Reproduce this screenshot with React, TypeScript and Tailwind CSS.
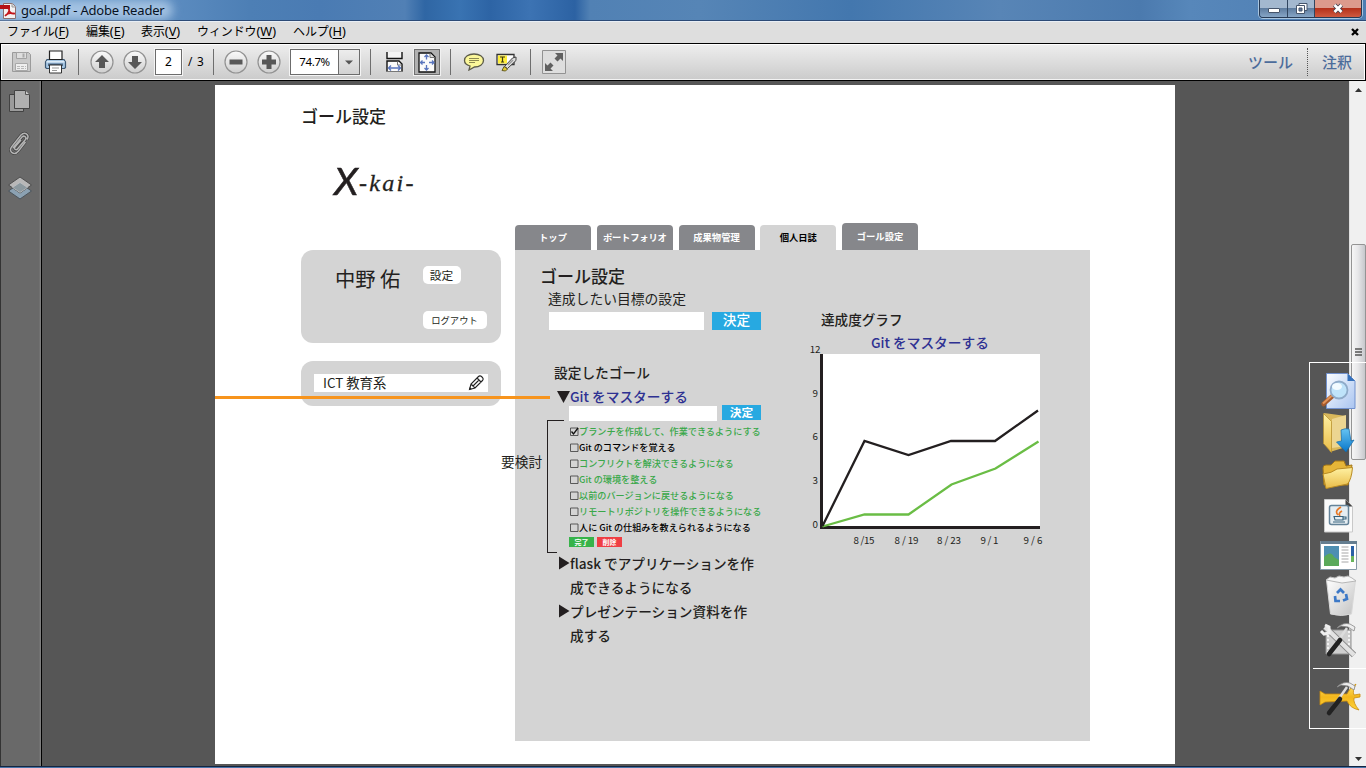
import React from "react";

const ui = "font-['Noto_Sans','Noto_Sans_CJK_JP',sans-serif]";
const jp = "font-['Noto_Sans_CJK_JP',sans-serif]";

type ArtProps = { box: string; className: string; children: React.ReactNode };
const Art = ({ box, className, children }: ArtProps) => (
  <svg viewBox={box} className={"block shrink-0 " + className} fill="none">
    {children}
  </svg>
);

const Sep = ({ className }: { className: string }) => (
  <div className={"h-[26px] w-px shrink-0 bg-[#6e6e6e] " + className} />
);

const RoundButton = ({ className, d }: { className: string; d: string }) => (
  <Art box="0 0 24 24" className={"h-6 w-6 " + className}>
    <defs>
      <linearGradient id="rb" x1="0" y1="0" x2="0" y2="1">
        <stop offset="0" stopColor="#fafafa" />
        <stop offset="1" stopColor="#cfcfcf" />
      </linearGradient>
    </defs>
    <circle cx="12" cy="12" r="11" fill="url(#rb)" stroke="#929292" strokeWidth="1.2" />
    <path d={d} fill="#585858" />
  </Art>
);

const TitleBar = () => (
  <header className="relative flex h-[22px] shrink-0 justify-between overflow-hidden border-b border-[#e8eef5] bg-[linear-gradient(90deg,#6a9acb_0px,#5c8cc0_170px,#4d7fb5_250px,#4a7bb3_320px,#5180b5_405px,#2f66a4_425px,#3973b2_460px,#2d64a5_490px,#3c73b3_530px,#2c62a3_575px,#5181b4_590px,#5685b6_700px,#4377ae_850px,#5885b6_1000px,#4b7aae_1140px,#5787ba_1190px,#4d7db2_1366px)]">
    <div className="absolute inset-x-0 bottom-0 h-px bg-[#2c4a76]" />
    <div className="absolute -left-3 top-0 h-[20px] w-[185px] rounded-full bg-[#b9d3ec]/75 blur-[5px]" />
    <div className="relative flex h-5 items-center">
      <Art box="0 0 17 20" className="h-5 w-[17px]">
        <path d="M3.500 3.500h9l3 3v12h-12z" fill="#f4f2f2" stroke="#8b6f70" />
        <path d="M12 3.500v3.500h3.500" stroke="#9b9b9b" fill="#ddd" />
        <path d="M0 5h10v4H0z" fill="#b51218" />
        <path d="M5 16c3-2 5-6 4-8M8.500 9c1 4 4 5 6.500 4.500M5 16c2-2.500 6-3.500 10-2.500" stroke="#c3161c" strokeWidth="1.500" />
      </Art>
      <span className={"ml-1 text-[13px] leading-5 tracking-[-0.180px] text-[#08121f] " + ui}>goal.pdf - Adobe Reader</span>
    </div>
    <div className="relative mr-1 flex h-[18px] w-[103px] overflow-hidden rounded-b-[4px] border border-t-0 border-[#263a55] shadow-[0_0_0_1px_#a9c5df]">
      <div className="flex w-7 items-center justify-center border-r border-[#30455f] bg-[linear-gradient(#a3b8cf_0_48%,#5e7c9f_49%,#86a5c6)]">
        <div className="mt-[3px] h-[5px] w-3 rounded-[1px] border border-[#46556b] bg-white" />
      </div>
      <div className="flex w-[27px] items-center justify-center border-r border-[#30455f] bg-[linear-gradient(#a3b8cf_0_48%,#5e7c9f_49%,#86a5c6)]">
        <Art box="0 0 13 13" className="mb-px h-[13px] w-[13px]">
          <path d="M4 1.500h8v7h-8z" fill="#fff" stroke="#46556b" />
          <path d="M1.500 3.500h8v8h-8z" fill="#fff" stroke="#46556b" />
          <path d="M4 6h3v3h-3z" fill="#60799a" stroke="#46556b" />
        </Art>
      </div>
      <div className="flex flex-1 items-center justify-center bg-[linear-gradient(#dc9a8c_0_45%,#b3301a_48%,#cf5a40)]">
        <Art box="0 0 12 11" className="mb-px h-[11px] w-3">
          <path d="M2.500 2l7 7M9.500 2l-7 7" stroke="#45424f" strokeWidth="4.500" />
          <path d="M2.500 2l7 7M9.500 2l-7 7" stroke="#fff" strokeWidth="2.700" />
        </Art>
      </div>
    </div>
  </header>
);

const Menu = ({ label, k, className }: { label: string; k: string; className: string }) => (
  <span className={"whitespace-nowrap " + className}>
    <span className="tracking-[-0.100px]">{label}</span>
    <span className="text-[12.800px]">(<span className="underline underline-offset-2">{k}</span>)</span>
  </span>
);

const MenuBar = () => (
  <nav className={"flex h-[21px] shrink-0 items-center bg-[#dedede] pb-[3px] pl-[7px] text-[12px] leading-[18px] text-black " + ui}>
    <Menu label="ファイル" k="F" className="w-[79px]" />
    <Menu label="編集" k="E" className="w-[55px]" />
    <Menu label="表示" k="V" className="w-14" />
    <Menu label="ウィンドウ" k="W" className="w-24" />
    <Menu label="ヘルプ" k="H" className="w-[60px]" />
    <Art box="0 0 8 8" className="ml-auto mr-[7px] mt-[2px] h-2 w-2">
      <path d="M1 1l6 6M7 1L1 7" stroke="#000" strokeWidth="2.300" />
    </Art>
  </nav>
);

const Toolbar = () => (
  <div className="flex h-[38px] shrink-0 items-center border border-black bg-[linear-gradient(#eeeeee,#cbcbcb)] shadow-[inset_0_1px_0_#fff,inset_0_-1px_0_#f3f3f3,inset_1px_0_0_#fff,inset_-1px_0_0_#fff]">
    <Art box="0 0 21 22" className="ml-[10px] h-[22px] w-[21px]">
      <path d="M1.500 1.500h16l2 2v17h-18z" fill="#c9c9c9" stroke="#9b9b9b" />
      <path d="M5.500 1.500h10v6h-10z" fill="#dedede" stroke="#a3a3a3" />
      <path d="M11.500 2.500h2v4h-2z" fill="#aaa" />
      <path d="M4.500 12.500h12v7h-12z" fill="#eee" stroke="#a8a8a8" />
      <path d="M6 15.500h9M6 17.500h9" stroke="#b8b8b8" strokeDasharray="3 1" />
    </Art>
    <Art box="0 0 23 24" className="ml-3 h-6 w-[23px]">
      <path d="M3 9.500h17l1.500 2.500v5.500l-1 1h-18l-1-1v-5.500z" fill="#a5c6e3" stroke="#3c5873" strokeWidth="1.200" />
      <path d="M5.500 1h12.500v8.500h-12.500z" fill="#fff" stroke="#222" strokeWidth="1.200" />
      <path d="M2.500 11h18v1.500h-18z" fill="#dcebf7" />
      <path d="M4 13.500h15v2.500H4z" fill="#4d6986" />
      <path d="M5.500 15h12v8h-12z" fill="#fff" stroke="#333" />
      <path d="M8 18h7M8 20.500h5" stroke="#999" />
    </Art>
    <Sep className="ml-[11px]" />
    <RoundButton className="ml-[11px]" d="M12 5l7 7h-4v6h-6v-6h-4z" />
    <RoundButton className="ml-[9px]" d="M12 19l7-7h-4v-6h-6v6h-4z" />
    <div className={"ml-[8px] flex h-[26px] w-[27px] items-center justify-center border border-[#6c6c6c] bg-white text-[12px] shadow-[0_0_0_1px_#f4f4f4] " + ui}>2</div>
    <span className={"ml-[6px] w-[25px] whitespace-pre text-[11.800px] tracking-[0.800px] " + ui}>/ 3</span>
    <Sep className="" />
    <RoundButton className="ml-[10px]" d="M5.500 9.500h13v5h-13z" />
    <RoundButton className="ml-[9px]" d="M9.500 5h5v4.500h4.500v5h-4.500v4.500h-5v-4.500h-4.500v-5h4.500z" />
    <div className={"ml-[9px] flex h-[26px] w-[70px] border border-[#6c6c6c] bg-white shadow-[0_0_0_1px_#f4f4f4] " + ui}>
      <span className="flex w-[47px] items-center justify-center text-[11.500px] tracking-[-0.350px]">74.7%</span>
      <span className="flex flex-1 items-center justify-center border-l border-[#6c6c6c] bg-[linear-gradient(#ededed,#d2d2d2)]">
        <Art box="0 0 8 5" className="h-[5px] w-2"><path d="M0 .5h8l-4 4z" fill="#555" /></Art>
      </span>
    </div>
    <Sep className="ml-[10px]" />
    <Art box="0 0 19 22" className="ml-[14px] h-[22px] w-[19px]">
      <path d="M2 1v6.500h15v-6.500" fill="#f4f4f4" stroke="#111" strokeWidth="1.400" />
      <path d="M2 20.500v-10.500h12l3 3v7.500" fill="#fafafa" stroke="#111" strokeWidth="1.400" />
      <path d="M1 20.500h17" stroke="#777" />
      <path d="M12.500 10.500v3.500h4" stroke="#777" />
      <path d="M3.500 17h12M6 14.500l-2.500 2.500l2.500 2.500M13 14.500l2.500 2.500l-2.500 2.500" stroke="#5975bd" strokeWidth="1.300" />
    </Art>
    <div className="ml-[10px] flex h-[26px] w-[26px] shrink-0 items-center justify-center border border-[#707070] bg-[#b1b1b1] shadow-[0_0_0_1px_#f1f1f1]">
      <Art box="0 0 18 21" className="h-[21px] w-[18px]">
        <path d="M1 1h12l4 4v15h-16z" fill="#fafafa" stroke="#111" strokeWidth="1.300" />
        <path d="M12 1.500v4h4.500" stroke="#777" fill="#ddd" />
        <path d="M8.500 3v4.500M8.500 13v5M2.500 10.500h4.500M11 10.500h5M6.500 5l2-2 2 2M6.500 16l2 2 2-2M4.500 8.500l-2 2 2 2M14 8.500l2 2-2 2" stroke="#5975bd" strokeWidth="1.300" />
      </Art>
    </div>
    <Sep className="ml-[10px]" />
    <Art box="0 0 22 18" className="ml-[12px] h-[18px] w-[22px]">
      <path d="M11 1c5.500 0 9.500 2.700 9.500 6.500s-4 6.500-9 6.500l-5.500 3 1-4c-3.500-1-5.500-3-5.500-5.500C1.500 3.700 5.500 1 11 1z" fill="#fbf79a" stroke="#5c5b49" strokeWidth="1.300" />
      <path d="M6 5.500h10M6 7.500h10M6 9.500h6" stroke="#8d8951" />
    </Art>
    <Art box="0 0 21 19" className="ml-[11px] h-[19px] w-[21px]">
      <path d="M1 1.500h17v10h-17z" fill="#fff" stroke="#333" strokeWidth="1.300" />
      <path d="M2 2.500h9v8h-9z" fill="#ffef3b" />
      <path d="M4 4h5M6.500 4v5M5 9h3" stroke="#403b16" strokeWidth="1.200" />
      <path d="M8.500 13.500l8-8.500 3.500-1v3.500l-8.500 8z" fill="#ddd" stroke="#424242" />
      <path d="M12 12l5-5" stroke="#999" strokeWidth="1.500" />
      <path d="M6 17.500l2-4 3.500 2.500-2 2z" fill="#e3cb32" stroke="#645b22" />
    </Art>
    <Sep className="ml-[13px]" />
    <Art box="0 0 24 24" className="ml-[11px] h-6 w-6">
      <path d="M.5 .5h23v23h-23z" fill="#dedede" stroke="#929292" />
      <path d="M13 3h8v8l-2.500-2.500-3 3-3-3 3-3zM3 13l2.500 2.500 3-3 3 3-3 3 2.500 2.500h-8z" fill="#606060" />
    </Art>
    <div className={"ml-auto flex items-center text-[15px] font-medium text-[#4c6c9b] " + ui}>
      <span className="w-[59px]">ツール</span>
      <span className="h-7 w-[15px] border-l border-dotted border-[#555]" />
      <span className="w-[43px]">注釈</span>
    </div>
  </div>
);

const Sidebar = () => (
  <aside className="flex w-[42px] shrink-0 flex-col border-l border-r border-l-[#333] border-r-black bg-[linear-gradient(90deg,#696969_0_38px,#858585_40px)] pl-[7px] pt-[8px]">
    <Art box="0 0 24 24" className="h-6 w-6">
      <path d="M1.500 5.500h14v17h-14z" fill="#9b9b9b" stroke="#424242" />
      <path d="M6.500 1.500h11l4 4v14h-15z" fill="#b0b0b0" stroke="#444" />
      <path d="M17.500 1.500v4h4" fill="#ccc" stroke="#555" />
    </Art>
    <Art box="0 0 24 26" className="mt-[18px] h-[26px] w-6">
      <path d="M5 17l9-11c2-2 5 0 3.500 2.500L9.500 18c-1.500 2-4 0-2.500-2l6-7M17.500 11l-7 9c-4 5-10.500 1-7-4l9.500-12c4-4 9 0 6 4.500" stroke="#3d3d3d" strokeWidth="2.800" />
      <path d="M5 17l9-11c2-2 5 0 3.500 2.500L9.500 18c-1.500 2-4 0-2.500-2l6-7M17.500 11l-7 9c-4 5-10.500 1-7-4l9.500-12c4-4 9 0 6 4.500" stroke="#b4b4b4" strokeWidth="1.500" />
    </Art>
    <Art box="0 0 24 24" className="mt-[19px] h-6 w-6">
      <path d="M.5 15l11.500-8 11.500 8-11.500 8z" fill="#8ba1b2" stroke="#4c555c" />
      <path d="M.5 9l11.500-8 11.500 8-11.500 8z" fill="#b8b8b8" stroke="#4e4e4e" />
      <path d="M4.500 11.500l7.500-5 7.500 5-7.500 5z" fill="#8c999f" stroke="#c0c3c5" strokeWidth=".7" />
    </Art>
  </aside>
);

const tabs = [
  { t: "トップ", c: "h-[25px] bg-[#86878b] text-white" },
  { t: "ポートフォリオ", c: "h-[25px] bg-[#86878b] text-white tracking-[-0.200px]" },
  { t: "成果物管理", c: "h-[25px] bg-[#86878b] text-white" },
  { t: "個人日誌", c: "h-[25px] bg-[#d4d4d4] text-black" },
  { t: "ゴール設定", c: "h-[27px] bg-[#86878b] text-white" },
];

const tasks = [
  { t: "ブランチを作成して、作業できるようにする", g: true, done: true },
  { t: "Git のコマンドを覚える", g: false, done: false },
  { t: "コンフリクトを解決できるようになる", g: true, done: false },
  { t: "Git の環境を整える", g: true, done: false },
  { t: "以前のバージョンに戻せるようになる", g: true, done: false },
  { t: "リモートリポジトリを操作できるようになる", g: true, done: false },
  { t: "人に Git の仕組みを教えられるようになる", g: false, done: false },
];

const Chart = () => (
  <svg viewBox="805 336 250 214" className={"block h-[214px] w-[250px] " + jp} fontSize="9.800" fill="#231f20">
    <path d="M821 354h219v174h-219z" fill="#fff" />
    <path d="M821.500 354v175M820 527.500h220" stroke="#231f20" strokeWidth="3" />
    <path d="M822.500 526.500l42-12h44l43-30 44-16 43-27" fill="none" stroke="#6abd45" strokeWidth="2.300" />
    <path d="M822.500 526l42-85 44 14 42.500-14h44l43-30.500" fill="none" stroke="#231f20" strokeWidth="2.300" />
    <g textAnchor="end">
      <text x="820.500" y="353">12</text>
      <text x="818" y="397">9</text>
      <text x="818" y="440">6</text>
      <text x="818" y="484">3</text>
      <text x="818" y="528">0</text>
    </g>
    <g>
      <text x="853.500" y="544" textLength="21">8 /15</text>
      <text x="894.500" y="544" textLength="24">8 / 19</text>
      <text x="937" y="544" textLength="24">8 / 23</text>
      <text x="980.500" y="544" textLength="18">9 / 1</text>
      <text x="1023.500" y="544" textLength="19">9 / 6</text>
    </g>
  </svg>
);

const Page = () => (
  <main className={"relative ml-[173px] mt-[4px] h-[679px] w-[960px] shrink-0 bg-white text-[#231f20] " + jp}>
    <h1 className="h-[44px] pl-[86px] pt-[19px] text-[17px] font-medium leading-6">ゴール設定</h1>
    <div className="flex h-[94px] items-start pl-[119px] pt-[30px] italic text-[#231f20]">
      <span className="w-[25px] origin-left scale-x-110 font-['Lato'] text-[36px] leading-[44px] [-webkit-text-stroke:0.500px_#231f20]">X</span>
      <span className="pt-[8px] font-['Liberation_Serif'] text-[24px] leading-[32px] tracking-[2.300px] [-webkit-text-stroke:0.300px_#231f20]">-kai-</span>
    </div>
    <div className="flex pl-[86px]">
      <div className="w-[200px] pt-[27px]">
        <section className="flex h-[93px] rounded-[12px] bg-[#d4d4d4] pl-[34px] pt-[16px]">
          <span className="w-[88px] whitespace-nowrap text-[20.300px] font-normal leading-6">中野 佑</span>
          <div className="flex flex-col items-start gap-[27px]">
            <button className="h-[18px] w-[38px] rounded-[5px] bg-white pr-px text-[11.700px] leading-[16px]">設定</button>
            <button className="h-[18px] w-[64px] rounded-[5px] bg-white pr-px text-[9.300px] leading-[18px]">ログアウト</button>
          </div>
        </section>
        <section className="mt-[18px] h-[45px] rounded-[12px] bg-[#d4d4d4] pl-[13px] pt-[13px]">
          <div className="flex h-[18px] w-[174px] justify-between bg-white pl-[9px] pr-[3px]">
            <span className="text-[13.400px] leading-[17px]">ICT 教育系</span>
            <Art box="0 0 17 17" className="h-[17px] w-[17px]">
              <path d="M1.500 15.500l1.500-5.500 7.500-7.500q1.500-1.500 3.500.5t.5 3.500l-7.500 7.500zM3 10l4 4M9 4l4 4M5 12l6-6" stroke="#222" strokeWidth="1.100" />
              <path d="M1 16l.8-3 2 2z" fill="#222" />
            </Art>
          </div>
        </section>
      </div>
      <div className="ml-[14px]">
        <div className="flex h-[27px] w-[403px] items-end justify-between text-[9.300px] font-bold">
          {tabs.map((x) => (
            <div key={x.t} className={"flex w-[76px] items-center justify-center rounded-t-[4px] leading-none " + x.c}>{x.t}</div>
          ))}
        </div>
        <section className="relative flex h-[491px] w-[575px] bg-[#d4d4d4]">
          <div className="w-[290px] pt-[13px]">
            <h2 className="pl-[25px] text-[17px] font-medium leading-[26px]">ゴール設定</h2>
            <p className="h-[23px] pl-[33px] text-[13.800px] leading-[18px]">達成したい目標の設定</p>
            <div className="flex gap-2 pl-[34px]">
              <div className="h-[18px] w-[155px] bg-white" />
              <button className="h-[18px] w-[49px] bg-[#27a9e1] pb-[3px] text-[13.700px] font-medium leading-[15px] text-white">決定</button>
            </div>
            <h3 className="mt-[30px] pl-[39px] text-[13.700px] font-medium leading-6">設定したゴール</h3>
            <div className="mt-[3px] flex h-[19px] items-center pl-[42px] text-[13.700px] font-medium leading-[19px]">
              <Art box="0 0 13 12" className="h-3 w-[13px]"><path d="M0 0h13l-6.500 12z" fill="#231f20" /></Art>
              <span className="text-[#2e3192]">Git をマスターする</span>
            </div>
            <div className="flex h-[15px] gap-[5px] pl-[54px]">
              <div className="h-[15px] w-[148px] bg-white" />
              <button className="-mt-px h-[15px] w-[39px] bg-[#27a9e1] pb-[2px] text-[11.700px] font-bold leading-[13px] text-white">決定</button>
            </div>
            <ul className="mt-[2px] pl-[55px] text-[9.130px] font-medium">
              {tasks.map((x) => (
                <li key={x.t} className={"flex h-4 items-center whitespace-nowrap leading-4 " + (x.g ? "text-[#39a849]" : "text-black")}>
                  <Art box="0 0 9 9" className="h-[9px] w-[9px]">
                    <path d="M.5 1h7.500v7.500h-7.500z" stroke="#4b4b4b" strokeWidth=".9" />
                    {x.done && <path d="M1.500 4.500l2 2.500 4.500-6" stroke="#111" strokeWidth="1.300" />}
                  </Art>
                  <span>{x.t}</span>
                </li>
              ))}
            </ul>
            <div className="mt-[2px] flex gap-[3px] pl-[54px] text-[7px] font-bold leading-[9px] text-white">
              <button className="h-[10px] w-[25px] bg-[#37b34a]">完了</button>
              <button className="h-[10px] w-[25px] bg-[#ef3e43]">削除</button>
            </div>
            <ul className="mt-[4px] pl-[43px] text-[13.650px] font-medium leading-6">
              {[["flask でアプリケーションを作", "成できるようになる"], ["プレゼンテーション資料を作", "成する"]].map(([a, b]) => (
                <li key={a} className="flex whitespace-nowrap">
                  <Art box="0 0 12 14" className="mt-[5px] h-[14px] w-3"><path d="M1 .5v13l10.500-6.500z" fill="#231f20" /></Art>
                  <span>{a}<br />{b}</span>
                </li>
              ))}
            </ul>
          </div>
          <div className="pt-[57px]">
            <h3 className="pl-[16px] text-[13.600px] font-medium leading-6">達成度グラフ</h3>
            <p className="h-[5px] pl-[66px] text-[13.700px] font-medium leading-[23px] text-[#2e3192]">Git をマスターする</p>
            <Chart />
          </div>
          <div className="absolute left-[32px] top-[170px] h-[133px] w-[10px] border-b border-l border-[#231f20]" />
          <div className="absolute left-[32px] top-[170px] h-px w-[17px] bg-[#231f20]" />
          <span className="absolute -left-[14px] top-[201px] whitespace-nowrap text-[13.700px] leading-5">要検討</span>
        </section>
      </div>
    </div>
    <div className="absolute left-0 top-[311px] h-[3px] w-[335px] bg-[#f7941d]" />
  </main>
);

const ScrollBar = () => (
  <div className="flex w-[17px] shrink-0 flex-col items-center border-l border-[#e0e0e0] bg-[#f0f0f0]">
    <Art box="0 0 7 4" className="mt-[7px] h-1 w-[7px]"><path d="M3.500 0l3.500 4h-7z" fill="#333" /></Art>
    <div className="mt-[152px] flex h-[216px] w-[15px] items-center justify-center rounded-[2px] border border-[#949494] bg-[linear-gradient(90deg,#f6f6f6,#e7e7e9_45%,#c7c8cc)]">
      <Art box="0 0 7 9" className="h-[9px] w-[7px]"><path d="M0 1h7M0 4h7M0 7h7" stroke="#555" strokeWidth="1.500" /></Art>
    </div>
    <Art box="0 0 7 4" className="mb-[5px] mt-auto h-1 w-[7px]"><path d="M3.500 4l3.500-4h-7z" fill="#333" /></Art>
  </div>
);

const Dock = () => (
  <div className="absolute left-[1309px] top-[362px] h-[367px] w-[57px] overflow-hidden border border-r-0 border-white">
    <svg viewBox="1310 363 56 365" className="block h-[365px] w-14" fill="none">
      <defs>
        <linearGradient id="paper" x1="0" y1="0" x2="1" y2="1"><stop stopColor="#fbfdff" /><stop offset="1" stopColor="#a9c4f0" /></linearGradient>
        <linearGradient id="gold" x1="0" y1="0" x2="0" y2="1"><stop stopColor="#fff1a3" /><stop offset="1" stopColor="#e9bc48" /></linearGradient>
        <linearGradient id="steel" x1="0" y1="0" x2="1" y2="1"><stop stopColor="#fff" /><stop offset="1" stopColor="#c2c2c2" /></linearGradient>
        <linearGradient id="blue" x1="0" y1="0" x2="0" y2="1"><stop stopColor="#66c4f3" /><stop offset="1" stopColor="#0876c9" /></linearGradient>
        <linearGradient id="amber" x1="0" y1="0" x2="0" y2="1"><stop stopColor="#ffe46b" /><stop offset=".5" stopColor="#f3b71c" /><stop offset="1" stopColor="#ffd33a" /></linearGradient>
      </defs>
      <path d="M1326.500 373.500h21l7.500 7.500v27.500h-28.500z" fill="url(#paper)" stroke="#7191ce" />
      <path d="M1347.500 373.500v7.500h7.500z" fill="#3772bb" />
      <path d="M1332.500 396l-9 8" stroke="#a55b2e" strokeWidth="4.500" strokeLinecap="round" />
      <path d="M1332 395.500l-9 8" stroke="#e2955a" strokeWidth="2" />
      <circle cx="1339" cy="390" r="8.500" fill="#bfe3fa" stroke="#8fabc9" strokeWidth="1.800" />
      <ellipse cx="1337" cy="386.500" rx="5" ry="3.500" fill="#f2fbff" />

      <path d="M1324 413l22 3v31l-16 5z" fill="#d9b85b" />
      <path d="M1332 419l14-4v31l-14 2z" fill="#ecd591" />
      <path d="M1323.500 413.500l8 8v31l-8-9z" fill="url(#gold)" stroke="#b48e2d" strokeWidth=".7" />
      <path d="M1341 430q4-2 8-1l2 12 3-1-8 12-9.500-10 5-1z" fill="url(#blue)" stroke="#1369a8" strokeWidth=".7" />

      <path d="M1324 485l-1-17q0-3 3-3h5l4-4h9l2 5 6-1-1 6-3 14z" fill="#e5b538" stroke="#a37617" />
      <path d="M1326 488.500l-3-14.500q9-1 14-5l15.500-1.500q-1 12-5 16.500z" fill="url(#gold)" stroke="#b98b23" />

      <path d="M1324.500 499.500h21l7 7v25.500h-28z" fill="#fafafa" stroke="#c9c9c9" />
      <path d="M1345.500 499.500v7h7z" fill="#444" />
      <rect x="1329.500" y="505.500" width="19" height="19" rx="2" fill="#e5edf2" stroke="#648399" strokeWidth="1.500" />
      <path d="M1341 507q-7 4-3 8M1342 511q-4 2-2 5" stroke="#e77825" strokeWidth="1.700" />
      <path d="M1334 516.500h9v3.500h-8zM1343 517h3v2h-3M1333 522h12" stroke="#37627d" strokeWidth="1.100" />

      <path d="M1320.500 541.500h36v28h-36z" fill="#fff" stroke="#8599a7" />
      <path d="M1321 541h36v3h-36z" fill="#657e90" />
      <path d="M1324 546h15v20h-15z" fill="#4e8fb2" />
      <path d="M1324 566v-9q7-7 10 0l5 3v6z" fill="#5aa95a" />
      <path d="M1341.500 547h7M1341.500 550h7M1341.500 553h7M1341.500 556h7M1341.500 559h7M1341.500 562h7" stroke="#a6a6a6" />
      <path d="M1351 546h3v10h-3z" fill="#2a61a5" /><path d="M1351 556h3v6h-3z" fill="#68b45b" />

      <path d="M1326.500 580h29l-4 34q-10 3-21 0z" fill="url(#steel)" stroke="#d8d8d8" />
      <path d="M1326 580l4-3 5 1 4-2 5 1 4-1 4 2 4 3-14 2z" fill="#f6f6f6" stroke="#b7b7b7" />
      <path d="M1337 593l3.500-3.500 3.500 3.500M1346 594l1 5-4 1.500M1340 601h-4.500l-.5-5" stroke="#3d79c7" strokeWidth="2.700" />

      <path d="M1326 630h25v24h-25z" fill="#cfcfcf" stroke="#919191" />
      <path d="M1328 631v22M1349 631v22" stroke="#f2f2f2" strokeWidth="2" strokeDasharray="2 2" />
      <path d="M1325 627l29 28" stroke="#888" strokeWidth="6" />
      <path d="M1325 627l29 28" stroke="#e2e2e2" strokeWidth="4.500" />
      <path d="M1321 631l3 3 5-1v-6l-4-2" stroke="#eee" strokeWidth="3" />
      <path d="M1347 628l-14 20" stroke="#ddd" strokeWidth="2.500" />
      <path d="M1340 640l-11 14" stroke="#222" strokeWidth="4.500" strokeLinecap="round" />
      <path d="M1337 628q6-6 13-4l5 3-1 4-6-4-7-1z" fill="#ededed" stroke="#888" strokeWidth=".8" />

      <path d="M1313 668.500h53" stroke="#fff" />

      <path d="M1320 691l5 3h22q3-7 9-10-4 7-2 11l6-1v3l-6 1q-1 5 5 12-9-2-12-9l-22 1-5 3z" fill="url(#amber)" stroke="#c98b0d" strokeWidth=".8" />
      <path d="M1347 687l-14 20" stroke="#ddd" strokeWidth="2.500" />
      <path d="M1340 699l-11 14" stroke="#222" strokeWidth="4.500" strokeLinecap="round" />
      <path d="M1337 687q6-6 13-4l5 3-1 4-6-4-7-1z" fill="#ededed" stroke="#888" strokeWidth=".8" />
    </svg>
  </div>
);

export default function App() {
  return (
    <div className="relative flex h-[768px] w-[1366px] flex-col overflow-hidden bg-[#565656]">
      <TitleBar />
      <MenuBar />
      <Toolbar />
      <div className="flex h-[685px] shrink-0">
        <Sidebar />
        <div className="flex min-w-0 flex-1 bg-[#565656]">
          <Page />
        </div>
        <ScrollBar />
      </div>
      <div className="h-[2px] shrink-0 border-t border-[#14253f] bg-[#4773a8]" />
      <Dock />
    </div>
  );
}
